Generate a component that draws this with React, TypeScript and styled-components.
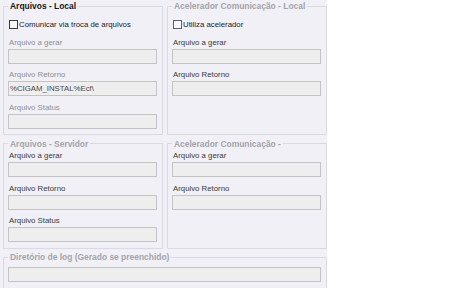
import React from "react";
import styled, { createGlobalStyle } from "styled-components";

const GlobalStyle = createGlobalStyle`
  html, body { margin: 0; padding: 0; background: #ffffff; }
  body { font-family: "Liberation Sans", Arial, sans-serif; }
`;

const Panel = styled.div`
  box-sizing: border-box;
  width: 327px;
  height: 288px;
  overflow: hidden;
  background: #f0f0f6;
  padding: 1px 0 0 3px;
  display: grid;
  grid-template-columns: 160px 160px;
  column-gap: 4px;
  row-gap: 3.5px;
  align-content: start;
  font-family: "Liberation Sans", Arial, sans-serif;
`;

const Group = styled.fieldset<{ $wide?: boolean; $pt?: number }>`
  box-sizing: border-box;
  margin: 0;
  min-width: 0;
  border: 1px solid #dadae3;
  padding: ${(p) => p.$pt ?? 1.5}px 5px 5.5px 4px;
  grid-column: ${(p) => (p.$wide ? "1 / -1" : "auto")};
  display: flex;
  flex-direction: column;
  gap: 5.5px;
`;

const Title = styled.legend<{ $active?: boolean }>`
  padding: 0 2px;
  font-size: 8.45px;
  line-height: 10px;
  font-weight: bold;
  color: ${(p) => (p.$active ? "#161616" : "#a4a4ac")};
  white-space: nowrap;
`;

const CheckRow = styled.label`
  display: flex;
  align-items: center;
  gap: 1px;
  height: 13px;
  margin-top: 5.5px;
  padding-left: 1px;
  font-size: 7.8px;
  color: #1c1c1c;
`;

const Box = styled.span<{ $tone: "dark" | "blue" }>`
  box-sizing: border-box;
  width: 9px;
  height: 9px;
  border: 1px solid ${(p) => (p.$tone === "dark" ? "#3a3a3a" : "#5a5a94")};
  background: ${(p) => (p.$tone === "dark" ? "#f6f6f6" : "#fbfbfd")};
`;

const Field = styled.div`
  display: flex;
  flex-direction: column;
  gap: 1px;
`;

const Label = styled.span<{ $muted?: boolean }>`
  padding-left: 1px;
  font-size: 7.8px;
  line-height: 11px;
  color: ${(p) => (p.$muted ? "#8e8e8e" : "#3a3a3a")};
  white-space: nowrap;
`;

const Input = styled.input`
  box-sizing: border-box;
  width: 100%;
  height: 15px;
  margin: 0;
  padding: 0 1px;
  border: 1px solid #c4c4c4;
  background: #eeeeee;
  font-family: "Liberation Sans", Arial, sans-serif;
  font-size: 7.8px;
  color: #4a4a4a;
  outline: none;
`;

type FieldProps = { label: string; value?: string; muted?: boolean };

const TextField: React.FC<FieldProps> = ({ label, value = "", muted }) => (
  <Field>
    <Label $muted={muted}>{label}</Label>
    <Input readOnly value={value} />
  </Field>
);

export default function App() {
  return (
    <>
      <GlobalStyle />
      <Panel>
        <Group>
          <Title $active>Arquivos - Local</Title>
          <CheckRow>
            <Box $tone="dark" />
            Comunicar via troca de arquivos
          </CheckRow>
          <TextField muted label="Arquivo a gerar" />
          <TextField muted label="Arquivo Retorno" value="%CIGAM_INSTAL%Ecf\" />
          <TextField muted label="Arquivo Status" />
        </Group>
        <Group>
          <Title>Acelerador Comunicação - Local</Title>
          <CheckRow>
            <Box $tone="blue" />
            Utiliza acelerador
          </CheckRow>
          <TextField label="Arquivo a gerar" />
          <TextField label="Arquivo Retorno" />
        </Group>
        <Group>
          <Title>Arquivos - Servidor</Title>
          <TextField label="Arquivo a gerar" />
          <TextField label="Arquivo Retorno" />
          <TextField label="Arquivo Status" />
        </Group>
        <Group>
          <Title>Acelerador Comunicação -</Title>
          <TextField label="Arquivo a gerar" />
          <TextField label="Arquivo Retorno" />
        </Group>
        <Group $wide $pt={5}>
          <Title>Diretório de log (Gerado se preenchido)</Title>
          <Input readOnly value="" />
        </Group>
      </Panel>
    </>
  );
}
